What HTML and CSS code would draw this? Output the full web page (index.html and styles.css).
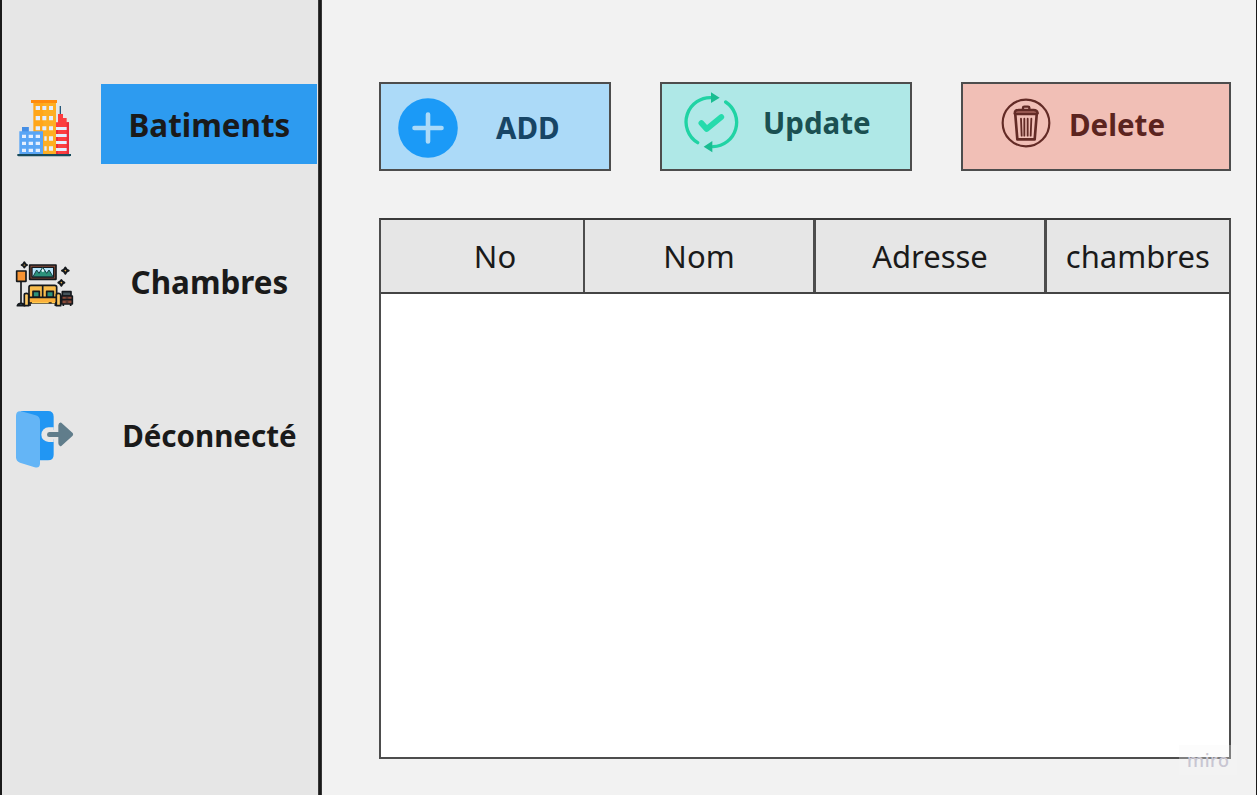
FILE: index.html
```html
<!DOCTYPE html>
<html lang="fr">
<head>
<meta charset="utf-8">
<title>Batiments</title>
<link rel="stylesheet" href="styles.css">
</head>
<body>
<div class="app">
  <nav class="sidebar">
    <a class="nav-item active">
      <svg class="nav-icon" width="75" height="75" viewBox="0 0 225 225">
        <path d="M157 48v30" stroke="#26587a" stroke-width="4"/>
        <path d="M76 38h68v154H76z" fill="#ffa61a"/>
        <path d="M106 38h38v154h-38z" fill="#fdb52b" opacity=".55"/>
        <path d="M69 30h78v9H69z" fill="#ff8b0d"/>
        <path d="M150 72h15v12h11v13h7v95h-39V97h6z" fill="#fc3e40"/>
        <path d="M144 110h6v82h-6zM176 97h7v95h-7z" fill="#e92c3c"/>
        <path d="M42 111h20v13h43v68H34v-68h8z" fill="#59a5f5"/>
        <path d="M42 111h20v13H42z" fill="#458ee5"/>
        <path d="M83 48h13v12H83zM103 48h12v12h-12zM123 48h12v12h-12zM83 78h13v13H83zM103 78h12v13h-12zM123 78h12v13h-12zM83 109h13v12H83zM103 109h12v12h-12zM123 109h12v12h-12zM109 139h7v13h-7zM123 139h12v13h-12zM109 169h7v13h-7zM123 169h12v13h-12zM144 111h32v9h-32zM144 132h32v9h-32zM144 153h32v9h-32zM144 174h32v9h-32zM42 134h12v10H42zM62 134h13v10H62zM83 134h13v10H83zM42 155h12v10H42zM62 155h13v10H62zM83 155h13v10H83zM42 176h12v10H42zM62 176h13v10H62zM83 176h13v10H83z" fill="#e4efff"/>
        <path d="M28 192h161v4l-3 3H31l-3-3z" fill="#174a5c"/>
      </svg>
      <span class="nav-label">Batiments</span>
    </a>
    <a class="nav-item rooms">
      <svg class="nav-icon" width="75" height="65" viewBox="0 0 225 195">
        <g stroke="#15191d" stroke-width="5" stroke-linejoin="round">
          <path d="M39 94v68" fill="none"/>
          <path d="M26 63h28v31H26z" fill="#f79332"/>
          <path d="M28 167q2-7 11-7t11 7z" fill="#396987"/>
          <path d="M65 45h79v43H65z" fill="#874b38"/>
          <path d="M72 52h65v29H72z" fill="#b5e5fb" stroke-width="4"/>
          <path d="M63 145v-33q0-6 6-6h71q6 0 6 6v33z" fill="#f9bd4d"/>
          <path d="M104 107v35" fill="none"/>
          <path d="M75 124h19v18H75zM116 124h20v18h-20z" fill="#2c927a"/>
          <path d="M62 142h86v17H62z" fill="#fbb03b"/>
          <path d="M49 134q0-4 6-4t7 4v33H49zM145 134q0-4 6-4t7 4v33h-13z" fill="#ffca65"/>
          <path d="M163 125h26v13h-26z" fill="#45545b"/>
          <path d="M161 138h32v24h-32z" fill="#8c4b39"/>
          <path d="M161 149h32M166 162v6M188 162v6M66 160v8M142 160v8" fill="none"/>
          <path d="M49 37l3 5 5 3-5 3-3 4-3-4-5-3 5-3zM172 53l4 6 6 3-6 3-4 6-4-6-6-3 6-3zM160 90l4 5 5 3-5 3-4 6-4-6-5-3 5-3z" fill="#f4b84d" stroke-width="6"/>
        </g>
        <path d="M75 80l11-20 7 10 11-18 12 18 7-10 12 20z" fill="#2c927a" stroke="#163e42" stroke-width="3"/>
        <path d="M100 63l4-8 5 8-4 4z" fill="#e8fbff"/>
        <path d="M72 158h50M131 158h10" stroke="#ffc94e" stroke-width="4"/>
        <path d="M173 144h8M173 156h8" stroke="#20252b" stroke-width="3"/>
      </svg>
      <span class="nav-label">Chambres</span>
    </a>
    <a class="nav-item logout">
      <svg class="nav-icon" width="75" height="75" viewBox="0 0 225 225">
        <path d="M39 33h81q17 0 17 17v40h-13a14 14 0 0 0 0 28h13v46q0 17-17 17H60z" fill="#2196f3"/>
        <path d="M137 82h-15a22 22 0 0 0 0 44h15z" fill="#e6e6e6"/>
        <path d="M24 48q0-17 16-14l43 12q13 4 13 17v127q0 16-16 12l-44-14q-12-4-12-16z" fill="#64b5f6"/>
        <path d="M124 96h27V76q1-10 9-8l34 31q3 4 0 8l-34 31q-8 3-9-8v-19h-27q-7 0-7-7t7-8z" fill="#607d8b"/>
      </svg>
      <span class="nav-label">Déconnecté</span>
    </a>
  </nav>

  <main class="content">
    <div class="actions">
      <button class="action add">
        <svg width="60" height="60" viewBox="0 0 60 60">
          <circle cx="30" cy="30" r="29.8" fill="#1b9af7"/>
          <path d="M30 16.5v27M16.5 30h27" stroke="#acdaf8" stroke-width="4.6" stroke-linecap="round"/>
        </svg>
        <span>ADD</span>
      </button>
      <button class="action update">
        <svg width="56" height="62" viewBox="0 0 168 186" fill="none">
          <path d="M88 20A73 73 0 0 0 44 155M128 33A73 73 0 0 1 90 167" stroke="#20d3a4" stroke-width="10" stroke-linecap="round"/>
          <path d="M84 4l26 16-26 16zM88 150v34l-26-17z" fill="#19bd91"/>
          <path d="M55 96l16 18 44-36" stroke="#25dbac" stroke-width="17" stroke-linecap="round" stroke-linejoin="round"/>
        </svg>
        <span>Update</span>
      </button>
      <button class="action delete">
        <svg width="50" height="50" viewBox="0 0 150 150" fill="none" stroke="#632b26" stroke-linecap="round" stroke-linejoin="round">
          <circle cx="75" cy="75" r="70" stroke-width="6.5"/>
          <path d="M43 51l6 73h52l6-73" stroke-width="8"/>
          <path d="M43 48h64q4 0 3-4-2-8-12-8H53q-11 0-12 8-1 4 2 4z" stroke-width="7" fill="#a8675f"/>
          <path d="M66 33v-4q0-3 4-3h11q4 0 4 3v4" stroke-width="7"/>
          <path d="M60 62l2 51M70 62v51M80 62v51M91 62l-2 51" stroke-width="5.5"/>
        </svg>
        <span>Delete</span>
      </button>
    </div>

    <section class="table">
      <div class="table-head">
        <div class="cell no"><span>No</span></div>
        <div class="cell nom"><span>Nom</span></div>
        <div class="cell adresse"><span>Adresse</span></div>
        <div class="cell chambres"><span>chambres</span></div>
      </div>
    </section>
    <div class="watermark">miro</div>
  </main>
</div>
</body>
</html>
```
FILE: styles.css
```css
* {
  box-sizing: border-box;
}

body {
  margin: 0;
  font-family: "Noto Sans", "Open Sans", sans-serif;
  color: #1a1a1a;
}

.app {
  display: flex;
  width: 1257px;
  height: 795px;
  overflow: hidden;
  background: #f2f2f2;
  border-left: 2px solid #1a1a1a;
  border-right: 1px solid #1a1a1a;
}

.sidebar {
  display: flex;
  flex-direction: column;
  flex: none;
  width: 320px;
  padding: 84px 0 0 6px;
  background: linear-gradient(to right, #e6e6e6 316px, #555 316px, #1a1a1a 317px, #1a1a1a 319px, #555 320px);
}

.nav-item {
  display: grid;
  grid-template-columns: 75px 216px;
  column-gap: 18.4px;
  height: 80px;
}

.nav-item.rooms {
  margin-top: 77px;
}

.nav-item.logout {
  margin-top: 74px;
}

.nav-icon {
  display: block;
  margin-top: 6px;
}

.rooms .nav-icon {
  margin-top: 9px;
}

.logout .nav-icon {
  margin-top: 5px;
}

.nav-label {
  display: flex;
  align-items: center;
  justify-content: center;
  height: 80px;
  font-size: 31.4px;
  font-weight: 700;
}

.logout .nav-label {
  font-size: 29.5px;
}

.active .nav-label {
  background: #2d9bf0;
}

.content {
  position: relative;
  flex: 1;
  padding: 82px 0 0 57px;
}

.actions {
  display: flex;
  gap: 49px;
}

.action {
  display: flex;
  align-items: flex-start;
  height: 89px;
  padding: 0;
  border: 2px solid #4d4d4d;
  font: 700 29.5px/40px "Noto Sans", "Open Sans", sans-serif;
  text-align: left;
}

.action svg {
  flex: none;
}

.add {
  width: 232px;
  background: #acdaf8;
  color: #174566;
}

.add svg {
  margin: 14px 0 0 17px;
}

.add span {
  margin: 24px 0 0 38px;
}

.update {
  width: 252px;
  background: #afe8e7;
  color: #1a5052;
}

.update svg {
  margin: 7px 0 0 21px;
}

.update span {
  margin: 19px 0 0 24px;
}

.delete {
  width: 269.5px;
  background: #f1bfb6;
  color: #5b241f;
}

.delete svg {
  margin: 14px 0 0 38px;
}

.delete span {
  margin: 21px 0 0 18px;
}

.table {
  width: 851.5px;
  height: 541px;
  margin-top: 47px;
  background: #fff;
  border: 2px solid #4d4d4d;
  border-top-color: #3a3a3a;
}

.table-head {
  display: grid;
  grid-template-columns: 204px 231px 231px 1fr;
  height: 74px;
  background: #e6e6e6;
  border-bottom: 2px solid #444;
}

.cell {
  display: flex;
  align-items: center;
  justify-content: center;
  border-right: 2px solid #4d4d4d;
  font-size: 31px;
}

.cell.no {
  padding-left: 26px;
}

.cell.nom,
.cell.adresse {
  border-right-width: 3px;
}

.cell.chambres {
  border-right: 0;
}

.watermark {
  position: absolute;
  left: 857px;
  top: 745px;
  width: 58px;
  height: 30px;
  padding-left: 8px;
  background: rgba(245, 245, 245, 0.3);
  color: #c8c6d2;
  font: 500 18px/30px "Noto Sans", sans-serif;
  letter-spacing: 0.6px;
}
```
